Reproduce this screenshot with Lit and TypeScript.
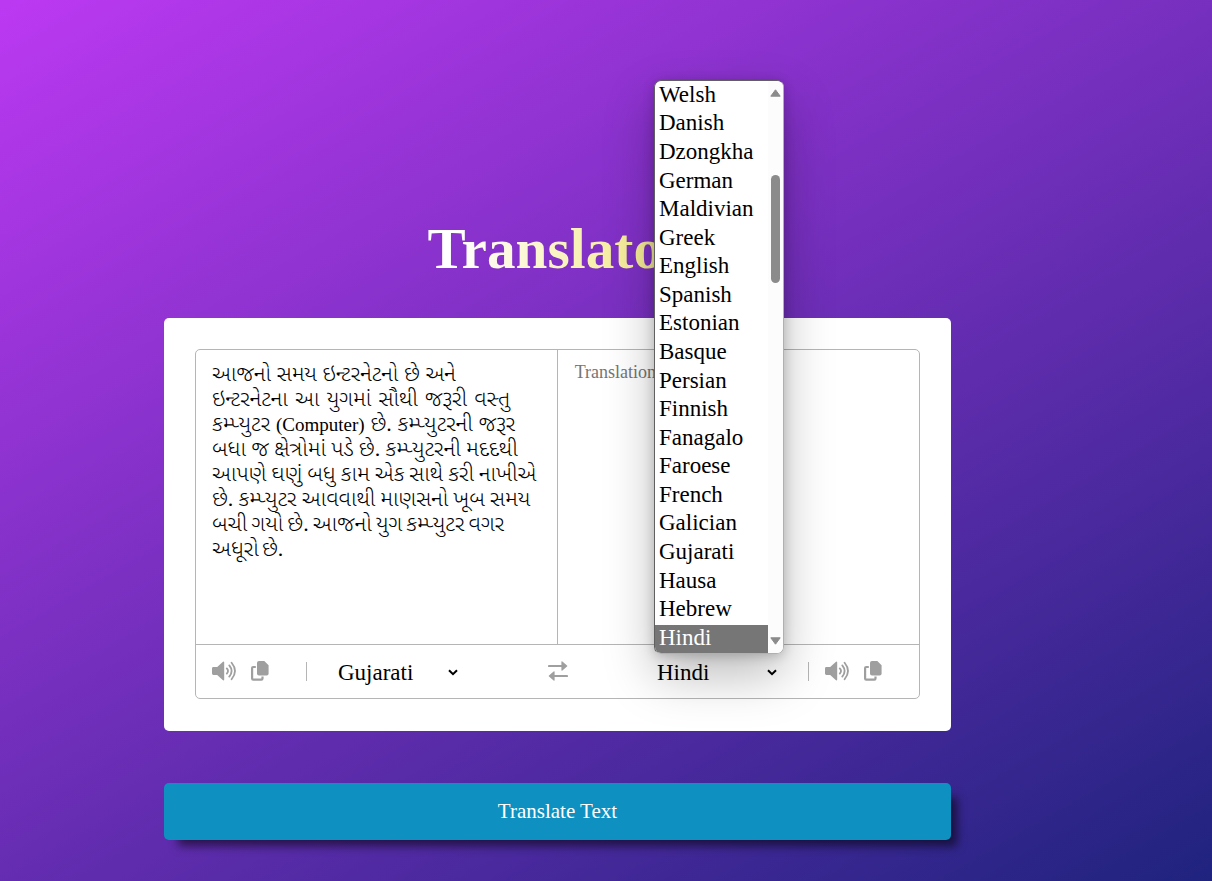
import { LitElement, html, css, svg } from "lit";
import { customElement } from "lit/decorators.js";

const LANGS = ["Welsh", "Danish", "Dzongkha", "German", "Maldivian", "Greek", "English", "Spanish", "Estonian", "Basque", "Persian", "Finnish", "Fanagalo", "Faroese", "French", "Galician", "Gujarati", "Hausa", "Hebrew", "Hindi"];

// Each line of the source text with its word spacing in pixels.
const SOURCE: [unknown, number][] = [
  ["આજનો સમય ઇન્ટરનેટનો છે અને", 0.1],
  ["ઇન્ટરનેટના આ યુગમાં સૌથી જરૂરી વસ્તુ", 1.7],
  [html`કમ્પ્યુટર <span class="latin">(Computer)</span> છે. કમ્પ્યુટરની જરૂર`, 0.3],
  ["બધા જ ક્ષેત્રોમાં પડે છે. કમ્પ્યુટરની મદદથી", -0.2],
  ["આપણે ઘણું બધુ કામ એક સાથે કરી નાખીએ", -0.5],
  ["છે. કમ્પ્યુટર આવવાથી માણસનો ખૂબ સમય", -0.4],
  ["બચી ગયો છે. આજનો યુગ કમ્પ્યુટર વગર", -1.4],
  ["અધૂરો છે.", -2.5],
];

const speaker = html`<svg class="speaker" viewBox="0 0 25 20">
  <path d="M1.4 6H5.2L10.7.9Q12.2 0 12.2 1.6V18.4Q12.2 20 10.7 19.1L5.2 14H1.4Q0 14 0 12.6V7.4Q0 6 1.4 6Z" fill="currentColor"/>
  ${svg`<path d="M14.8 7.4Q17.2 10 14.8 12.6M17.3 4.4Q21.9 10 17.3 15.6M19.6 1.8Q26.4 10 19.6 18.2" fill="none" stroke="currentColor" stroke-width="1.8" stroke-linecap="round"/>`}
</svg>`;

const copy = html`<svg class="copy" viewBox="0 0 18 20">
  <path d="M8 0H13.3L17.6 4.3V12.4Q17.6 14.4 15.6 14.4H8Q6 14.4 6 12.4V2Q6 0 8 0Z" fill="currentColor"/>
  <path d="M4.8 6H2.2Q1.1 6 1.1 7.1V17.5Q1.1 18.7 2.2 18.7H10.4Q11.5 18.7 11.5 17.5V15.6" fill="none" stroke="currentColor" stroke-width="2.2"/>
</svg>`;

const swap = html`<svg class="swap" viewBox="0 0 20 20">
  <path d="M1 5H15M5 15H19" fill="none" stroke="currentColor" stroke-width="2.2" stroke-linecap="round"/>
  <path d="M13.4 1Q13.4-.2 14.4.6L19 4.4Q19.6 5 19 5.6L14.4 9.4Q13.4 10.2 13.4 9ZM6.6 11Q6.6 9.8 5.6 10.6L1 14.4Q.4 15 1 15.6L5.6 19.4Q6.6 20.2 6.6 19Z" fill="currentColor"/>
</svg>`;

const chevron = html`<svg class="chevron" viewBox="0 0 10 7"><path d="M1 1.2L5 5.2L9 1.2" fill="none" stroke="#000" stroke-width="2"/></svg>`;

@customElement("app-root")
export class AppRoot extends LitElement {
  static styles = css`
    :host { display: block; font-family: "Liberation Serif", "Noto Sans Gujarati", serif; }
    * { box-sizing: border-box; }
    .page { position: relative; height: 881px; overflow: hidden; padding: 213px 0 0 164px; background: linear-gradient(150deg, #bc39f2 0%, #1f237e 100%); }
    .column { width: 787px; }
    .title { margin: 0 0 33px; height: 72px; line-height: 72px; font-size: 57.3px; font-weight: 700; text-align: center; }
    .title span { display: inline-block; background: linear-gradient(90deg, #fff 10%, #f5eb96 80%); background-clip: text; -webkit-background-clip: text; color: transparent; }
    .card { height: 413px; background: #fff; border-radius: 5px; padding: 31px; }
    .box { height: 350px; border: 1px solid #b5b5b5; border-radius: 5px; display: flex; flex-direction: column; }
    .texts { display: grid; grid-template-columns: 362px 1fr; height: 295px; border-bottom: 1px solid #b5b5b5; }
    .source { border-right: 1px solid #b5b5b5; padding: 11px 16px; font-size: 22px; font-weight: 300; color: #000; }
    .line { height: 25px; line-height: 26px; white-space: nowrap; }
    .latin { font-size: 19px; }
    .target { padding: 11px 16.7px; font-size: 18px; line-height: 22px; color: #757575; }
    .bar { flex: 1; display: flex; align-items: center; color: #9f9f9f; padding: 0 37px 0 16px; }
    svg { display: block; flex: none; }
    .speaker { width: 25px; height: 20px; }
    .copy { width: 18px; height: 20px; margin-left: 14px; }
    .swap { width: 20px; height: 20px; margin-left: 90px; }
    .icons { display: flex; align-items: center; height: 20px; margin-bottom: 1px; }
    .divider { width: 1px; height: 19px; background: #b5b5b5; margin-bottom: 1px; }
    .left { margin-left: 37px; }
    .right { margin-right: 16px; }
    .select { display: flex; align-items: center; width: 120px; margin-left: 31px; padding-top: 2px; font-size: 23px; line-height: 28px; color: #000; justify-content: space-between; }
    .second { margin-left: 89px; margin-right: 31px; }
    .chevron { width: 10px; height: 7px; }
    .translate { display: block; width: 787px; height: 57px; margin-top: 52px; padding: 0; border: 0; border-radius: 5px; background: #0e90c1; color: #fff; font: 21px "Liberation Serif", serif; box-shadow: 10px 10px 10px -4px rgba(0,0,0,.55); }
    .menu { position: absolute; left: 654px; top: 80px; width: 130px; height: 574px; display: flex; background: #fff; border: 1px solid; border-color: #606060 #b0b0b0 #b0b0b0 #606060; border-radius: 7px; overflow: hidden; }
    .shadow { position: absolute; left: 654px; top: 80px; width: 130px; height: 574px; border-radius: 7px; box-shadow: 0 22px 50px rgba(0,0,0,.26), 0 2px 12px rgba(0,0,0,.2); }
    .list { width: 113px; margin-top: -.24px; }
    .option { height: 28.59px; line-height: 27px; padding-left: 4px; font-size: 23px; color: #000; white-space: nowrap; }
    .active { height: 30px; background: #767676; color: #fff; border-top: 1px solid #fff; line-height: 25px; }
    .scroll { flex: 1; display: flex; flex-direction: column; align-items: center; background: #fcfcfc; padding: 8px 0; }
    .tri { width: 11px; height: 8px; }
    .thumb { width: 9px; height: 108px; border-radius: 5px; background: #8b8b8b; margin: 78px 0 auto; }
  `;

  render() {
    return html`<main class="page">
      <div class="column">
        <h1 class="title"><span>Translator</span></h1>
        <section class="card">
          <div class="box">
            <div class="texts">
              <div class="source">${SOURCE.map(([t, gap]) => html`<div class="line" style="word-spacing:${gap}px">${t}</div>`)}</div>
              <div class="target">Translation</div>
            </div>
            <div class="bar">
              <div class="icons">${speaker}${copy}</div>
              <div class="divider left"></div>
              <div class="select"><span>Gujarati</span>${chevron}</div>
              <div class="icons">${swap}</div>
              <div class="select second"><span>Hindi</span>${chevron}</div>
              <div class="divider right"></div>
              <div class="icons">${speaker}${copy}</div>
            </div>
          </div>
        </section>
        <button class="translate">Translate Text</button>
      </div>
      <div class="shadow"></div>
      <div class="menu">
        <div class="list">${LANGS.map((l) => html`<div class="option ${l === "Hindi" ? "active" : ""}">${l}</div>`)}</div>
        <div class="scroll">
          <svg class="tri" viewBox="0 0 11 8"><path d="M5.5.8L10.2 7.2H.8Z" fill="#8b8b8b" stroke="#8b8b8b" stroke-linejoin="round"/></svg>
          <div class="thumb"></div>
          <svg class="tri" viewBox="0 0 11 8"><path d="M5.5 7.2L10.2.8H.8Z" fill="#8b8b8b" stroke="#8b8b8b" stroke-linejoin="round"/></svg>
        </div>
      </div>
    </main>`;
  }
}
